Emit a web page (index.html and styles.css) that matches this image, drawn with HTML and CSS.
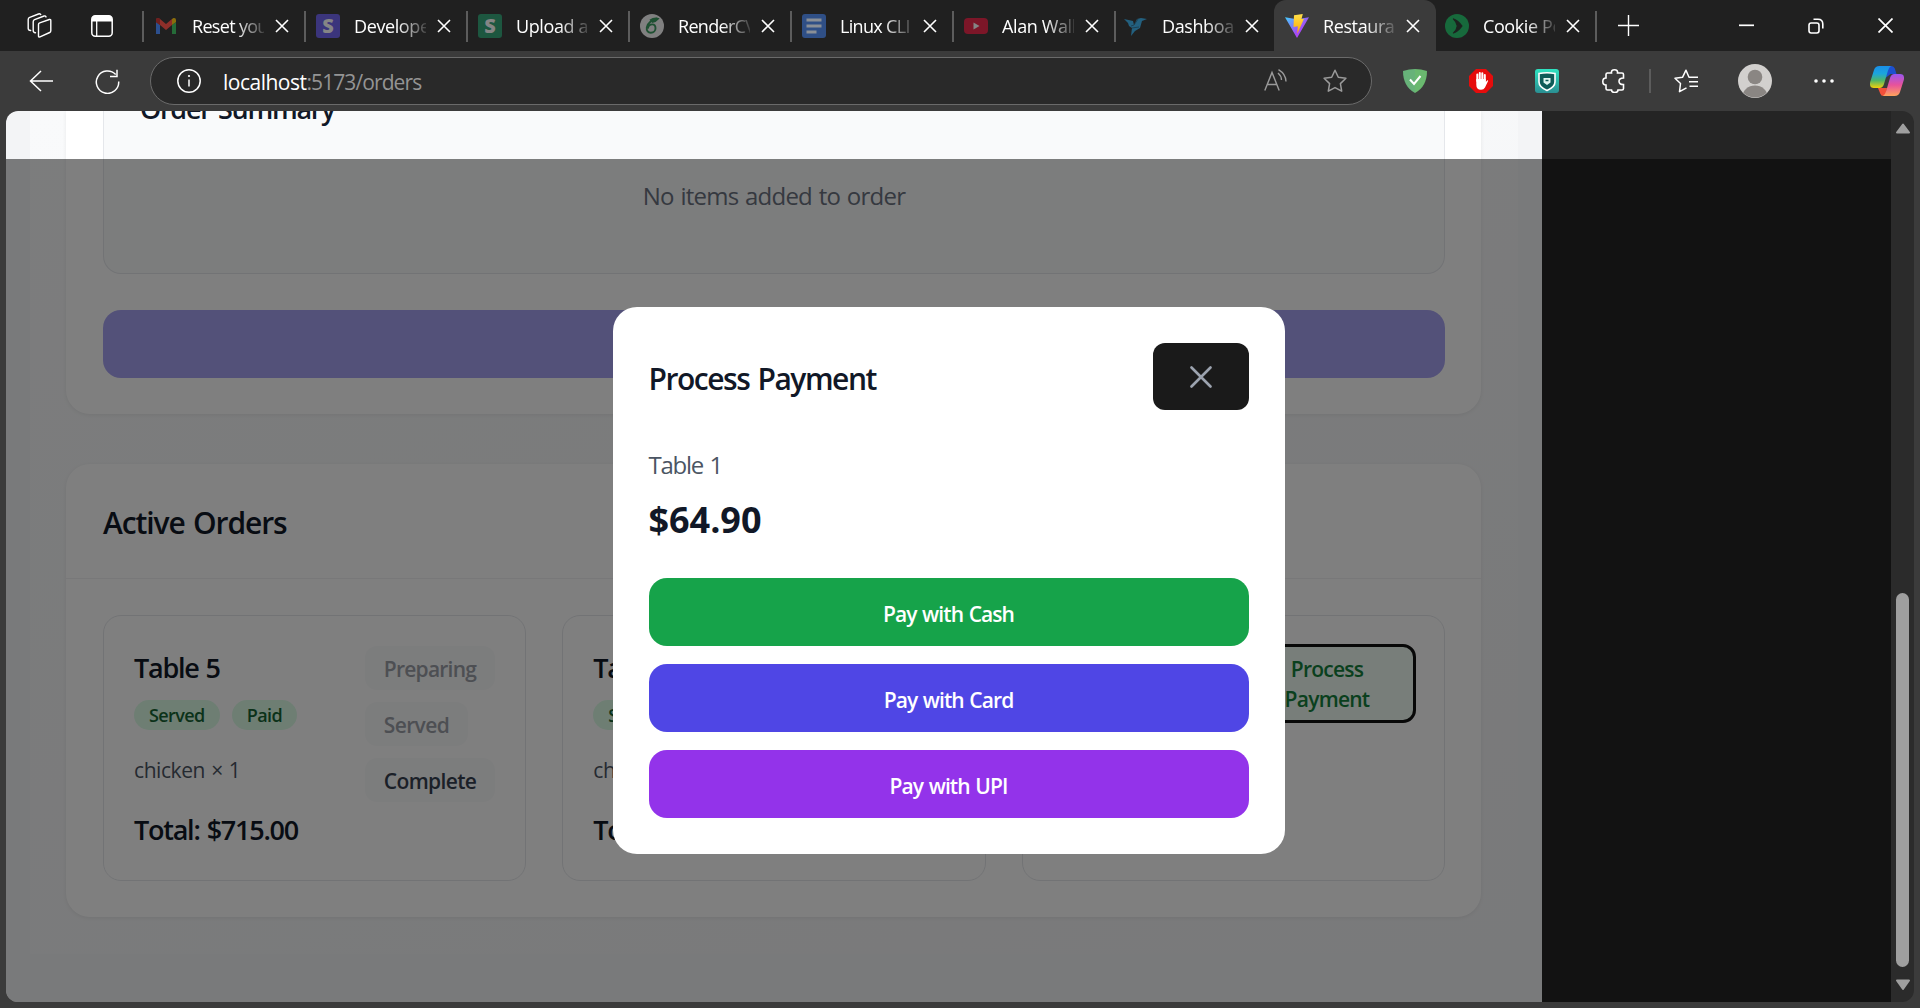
FILE: index.html
```html
<!DOCTYPE html>
<html lang="en">
<head>
<meta charset="utf-8">
<title>Restaurant Orders</title>
<link rel="stylesheet" href="styles.css">
</head>
<body>
<svg class="defs" width="0" height="0" aria-hidden="true">
  <symbol id="x" viewBox="0 0 14 14"><path d="M1 1l12 12M13 1L1 13" fill="none" stroke="#fff" stroke-width="1.6"/></symbol>
  <linearGradient id="vb" x1="0" y1="0" x2="1" y2="1"><stop offset="0" stop-color="#41d1ff"/><stop offset=".6" stop-color="#a34df5"/><stop offset="1" stop-color="#bd34fe"/></linearGradient>
  <linearGradient id="vy" x1="0" y1="0" x2="0" y2="1"><stop offset="0" stop-color="#ffe04a"/><stop offset="1" stop-color="#ffa800"/></linearGradient>
  <linearGradient id="c1" x1="0" y1="0" x2="0" y2="1"><stop offset="0" stop-color="#1a8fe8"/><stop offset=".35" stop-color="#1ba5dd"/><stop offset=".65" stop-color="#4db56a"/><stop offset="1" stop-color="#f3d009"/></linearGradient>
  <linearGradient id="c2" x1="0" y1="0" x2="0" y2="1"><stop offset="0" stop-color="#9a56f0"/><stop offset=".5" stop-color="#e8529b"/><stop offset="1" stop-color="#ffa45c"/></linearGradient>
  <linearGradient id="tl" x1="0" y1="0" x2="0" y2="1"><stop offset="0" stop-color="#2fe3c1"/><stop offset="1" stop-color="#2a8f92"/></linearGradient>
</svg>
<div class="browser">
  <header class="tabstrip">
    <div class="strip-tools">
      <svg width="25" height="25" viewBox="0 0 25 25" fill="none" stroke="#fff" stroke-width="1.4" stroke-linejoin="round" stroke-linecap="round"><path d="M11.500 11.500q0-1.300 1.200-1.700L22.400 6.500q1.400-.4 1.400 1v10.300q0 1.200-1.100 1.700l-9.700 4.400q-1.500.5-1.500-1zM8.500 19.800q-2.300-.2-2.300-2.300V8.700q0-1.500 1.400-2.100l9.500-3.600q1.300-.4 1.900.9M3.700 17.500q-2.500-.2-2.500-2V6.500q0-1.500 1.500-2.100L11.500 1q1.300-.5 2.200.4"/></svg>
      <svg width="22" height="22" viewBox="0 0 22 22"><rect x=".8" y=".8" width="20.400" height="20.400" rx="3.500" fill="none" stroke="#fff" stroke-width="1.500"/><path d="M1 6.500V4q0-3.500 3.500-3.500h13Q21 .5 21 4v2.500z" fill="#fff"/><path d="M5.700 6v15" stroke="#fff" stroke-width="1.300"/></svg>
    </div>
    <div class="tab"><svg class="fav" viewBox="0 0 24 24"><path d="M2 20V8l4 3v9z" fill="#2c4f8e"/><path d="M18 20v-9l4-3v12z" fill="#256b38"/><path d="M18 11V5l1.500-1Q22 3.500 22 6v2z" fill="#8a6d0c"/><path d="M2 8V6q0-2.500 2.500-2L6 5l6 5 6-5v6l-6 5-6-5z" fill="#8e2f2a"/><path d="M2 8V6q0-2.500 2.500-2L6 5v6z" fill="#6e1f1e"/></svg><span class="label snug">Reset your</span><svg class="close"><use href="#x"/></svg></div>
    <div class="tab"><span class="fav letter indigo">S</span><span class="label">Developers</span><svg class="close"><use href="#x"/></svg></div>
    <div class="tab"><span class="fav letter green">S</span><span class="label">Upload an</span><svg class="close"><use href="#x"/></svg></div>
    <div class="tab"><svg class="fav" viewBox="0 0 24 24"><circle cx="12" cy="12" r="12" fill="#808080"/><path d="M17.500 4.500Q8 7 6.800 13.500c-.6 3.500 1.500 5.300 4 5.300 3 0 4.700-2.200 4.700-4.500 0-2.400-1.300-3.900-3.200-3.900-2.500 0-4 2-4.500 4M10 6.500Q14 3.800 18 4.800 16 7.500 12 8" fill="none" stroke="#1f5032" stroke-width="1.900"/></svg><span class="label snug">RenderCV</span><svg class="close"><use href="#x"/></svg></div>
    <div class="tab"><svg class="fav" viewBox="0 0 24 24"><rect width="24" height="24" rx="3" fill="#2f4f86"/><path d="M4.500 6h15M4.500 12h15M4.500 18h10" stroke="#8a8f96" stroke-width="3"/></svg><span class="label snug">Linux CLI</span><svg class="close"><use href="#x"/></svg></div>
    <div class="tab"><svg class="fav" viewBox="0 0 24 24"><rect y="4" width="24" height="16" rx="4" fill="#7c1628"/><path d="M9.500 8.500v7l6-3.500z" fill="#858585"/></svg><span class="label">Alan Walk</span><svg class="close"><use href="#x"/></svg></div>
    <div class="tab slim"><svg class="fav" viewBox="0 0 24 24"><path d="M0 5l9 2 1 4 3-6 4-1 6 1-5 2-2 7-5 3-4 5 1-8-3-2-1-3z" fill="#23607f"/><path d="M7 12l3-1 4-6M8 14l7-1" stroke="#1b3a4a" stroke-width=".8" fill="none"/></svg><span class="label">Dashboard</span><svg class="close"><use href="#x"/></svg></div>
    <div class="tab slim active"><svg class="fav" viewBox="0 0 24 24"><path d="M0 3.200l12 2 12-2L12 24z" fill="url(#vb)"/><path d="M9 1.200L17.800 0l-1.300 5 2.500-.3-6.700 15 .5-7.500-4.300.8z" fill="url(#vy)"/></svg><span class="label">Restaurant</span><svg class="close"><use href="#x"/></svg></div>
    <div class="tab slim last"><svg class="fav" viewBox="0 0 24 24"><circle cx="12" cy="12" r="12" fill="#176a3c"/><path d="M8.500 5q4.500 1.500 8.500 7-4 5.500-8.500 7 3-2.500 3.800-7-.8-4.500-3.800-7z" fill="#1d2320" stroke="#1d2320" stroke-width="1.200" stroke-linejoin="round"/><path d="M7.500 9.500L10.800 12l-3.300 2.500z" fill="#176a3c"/></svg><span class="label">Cookie Po</span><svg class="close"><use href="#x"/></svg></div>
    <svg class="plus" width="21" height="21" viewBox="0 0 21 21"><path d="M10.500 0v21M0 10.500h21" stroke="#fff" stroke-width="1.400"/></svg>
    <div class="window-controls">
      <svg width="15" height="15" viewBox="0 0 15 15"><path d="M0 7.300h15" stroke="#fff" stroke-width="1.700"/></svg>
      <svg width="16" height="16" viewBox="0 0 16 16" fill="none" stroke="#fff" stroke-width="1.600"><rect x="1" y="5" width="10" height="10" rx="2.200"/><path d="M5.500 1.200h4.500q4.800 0 4.800 4.800v4.500"/></svg>
      <svg width="15" height="15" viewBox="0 0 15 15"><path d="M.5.500l14 14M14.500.500l-14 14" stroke="#fff" stroke-width="1.700"/></svg>
    </div>
  </header>

  <div class="toolbar">
    <svg class="back" width="24" height="22" viewBox="0 0 24 22"><path d="M12 1L1.500 11 12 21M1.500 11H24" fill="none" stroke="#fff" stroke-width="1.500"/></svg>
    <svg class="reload" width="25" height="25" viewBox="0 0 25 25"><path d="M20.700 5.500A11.200 11.200 0 1 0 23.700 12.500M22 .8v6.700h-7" fill="none" stroke="#fff" stroke-width="1.500"/></svg>
    <div class="address">
      <svg width="24" height="24" viewBox="0 0 24 24"><circle cx="12" cy="12" r="11.200" fill="none" stroke="#fff" stroke-width="1.500"/><path d="M12 10.500v7" stroke="#fff" stroke-width="1.500"/><circle cx="12" cy="7" r="1.100" fill="#fff"/></svg>
      <div class="url"><span class="host">localhost</span><span>:5173/orders</span></div>
      <svg class="read" width="24" height="22" viewBox="0 0 24 22" fill="none" stroke="#9a9a9a" stroke-width="1.400"><path d="M.8 21.500L8 3.500l7.200 18M3.300 15.500h9.500M14 4q3.500 3 3.500 7M14.500.600Q21.800 5 22 12.500"/></svg>
      <svg width="24" height="24" viewBox="0 0 24 24"><path d="M12 1.300l3.300 6.900 7.600 1.100-5.500 5.300 1.300 7.600L12 18.600l-6.700 3.600 1.300-7.600L1.100 9.300l7.600-1.100z" fill="none" stroke="#9a9a9a" stroke-width="1.500" stroke-linejoin="round"/></svg>
    </div>
    <div class="extensions">
      <svg width="24" height="24" viewBox="0 0 24 24"><path d="M0 2Q6 0 12 0v24Q0 17.500 0 2z" fill="#67b279"/><path d="M24 2Q18 0 12 0v24Q24 17.500 24 2z" fill="#6ab96f"/><path d="M7 10.500l4 4.500 6.500-8" fill="none" stroke="#fff" stroke-width="2"/></svg>
      <svg width="24" height="24" viewBox="0 0 24 24"><path d="M7 0h10l7 7v10l-7 7H7l-7-7V7z" fill="#e60c0c"/><path d="M8.300 12V5.500M10.800 11V4M13.300 11V4.200M15.800 12V6" stroke="#fff" stroke-width="2" stroke-linecap="round"/><path d="M7.300 10h9.500v3l1.300-1.600q1.200-.6 1 .7L16 18.500q-1.200 2.200-4 2.200-4.700 0-4.700-5z" fill="#fff"/></svg>
      <svg width="24" height="24" viewBox="0 0 24 24"><rect width="24" height="24" rx="3" fill="url(#tl)"/><path d="M4 4.500Q12 3 20 4.500V13q0 5-8 8.500Q4 18 4 13z" fill="#0e5b58" stroke="#fff" stroke-width="1.600"/><path d="M8.500 9h7v4.500L12 16l-3.500-2.500z" fill="#dff5f0"/><path d="M10.500 11.500h3" stroke="#0e5b58" stroke-width="1.500"/></svg>
      <svg class="puzzle" width="24" height="24" viewBox="0 0 24 24"><path d="M5 4h4.500Q9 .8 12.500.800T15.500 4H20q1.500 0 1.500 1.500V9q-4.500 0-4.500 3.300T21.500 15.500v4q0 1.500-1.500 1.500h-4q0 2.500-3.200 2.500T9.500 21H5.500Q4 21 4 19.500V16Q.8 16 .8 12.500T4 9V5.500Q4 4 5.500 4z" fill="none" stroke="#fff" stroke-width="1.600"/></svg>
    </div>
    <span class="divider"></span>
    <svg class="favorites" width="24" height="24" viewBox="0 0 24 24" fill="none" stroke="#fff" stroke-width="1.500" stroke-linejoin="round"><path d="M12.500 18.800L5.500 22.700l1-8.200L1 9.300l7.500-1L12 1.200l3 7.100H24M15 12.800h9M15.500 17.300H24"/></svg>
    <svg class="avatar" width="34" height="34" viewBox="0 0 34 34"><clipPath id="ac"><circle cx="17" cy="17" r="16.500"/></clipPath><circle cx="17" cy="17" r="17" fill="#d2d0ce"/><g clip-path="url(#ac)" fill="#8a8683"><circle cx="17" cy="13" r="7.300"/><ellipse cx="17" cy="32.500" rx="12.500" ry="11"/></g></svg>
    <svg class="more" width="20" height="6" viewBox="0 0 20 6" fill="#fff"><circle cx="2" cy="3" r="1.800"/><circle cx="10" cy="3" r="1.800"/><circle cx="18" cy="3" r="1.800"/></svg>
    <svg class="copilot" width="34" height="30" viewBox="0 0 34 30"><path d="M17 0h4.500q2.500 0 3.300 2.500L26.500 8h-6l-5 4z" fill="#1d50d0"/><path d="M8 22h9l-1 8h-2.500q-2.500 0-3.300-2.500z" fill="#f2503a"/><path d="M9.500 0H21q-2 1-3 4.500l-4 13.500q-1.200 4-4.500 4H4q-5 0-3.800-6L4 4Q5.200 0 9.500 0z" fill="url(#c1)"/><path d="M24.500 30H13q2-1 3-4.500L20 12q1.200-4 4.500-4H30q5 0 3.800 6L30 26q-1.200 4-5.500 4z" fill="url(#c2)"/></svg>
  </div>

  <div class="viewport">
    <div class="page">
      <div class="shell">
        <main class="content">
          <section class="card order-form">
            <div class="summary">
              <h3>Order Summary</h3>
              <p>No items added to order</p>
            </div>
            <div class="place-order"></div>
          </section>

          <section class="card active-orders">
            <div class="card-head"><h2>Active Orders</h2></div>
            <div class="orders">
              <article class="order">
                <div class="info">
                  <h3 class="table-name">Table 5</h3>
                  <div class="pills"><span class="pill">Served</span><span class="pill">Paid</span></div>
                  <p class="item">chicken × 1</p>
                  <p class="total">Total: $715.00</p>
                </div>
                <div class="actions">
                  <button class="act off tight">Preparing</button>
                  <button class="act off">Served</button>
                  <button class="act">Complete</button>
                </div>
              </article>
              <article class="order">
                <div class="info">
                  <h3 class="table-name">Table 3</h3>
                  <div class="pills"><span class="pill">Served</span></div>
                  <p class="item">chicken × 1</p>
                  <p class="total">Total: $64.90</p>
                </div>
              </article>
              <article class="order">
                <div class="info"></div>
                <div class="actions"><button class="process">Process Payment</button></div>
              </article>
            </div>
          </section>
        </main>
      </div>

      <div class="overlay">
        <div class="modal">
          <div class="modal-head">
            <h2>Process Payment</h2>
            <button class="dismiss"><svg width="22" height="22" viewBox="0 0 22 22"><path d="M1.500 1.500l19 19M20.500 1.500l-19 19" stroke="#9ca3af" stroke-width="2.600" stroke-linecap="round"/></svg></button>
          </div>
          <p class="modal-table">Table 1</p>
          <p class="amount">$64.90</p>
          <div class="methods">
            <button class="pay cash">Pay with Cash</button>
            <button class="pay bank">Pay with Card</button>
            <button class="pay upi">Pay with UPI</button>
          </div>
        </div>
      </div>
    </div>
    <div class="scrollbar">
      <svg width="16" height="11" viewBox="0 0 16 11"><path d="M8 1.500L14 9.500H2z" fill="#9f9f9f" stroke="#9f9f9f" stroke-width="2" stroke-linejoin="round"/></svg>
      <span class="thumb"></span>
      <svg width="16" height="12" viewBox="0 0 16 12"><path d="M8 10L14 1.500H2z" fill="#9f9f9f" stroke="#9f9f9f" stroke-width="2" stroke-linejoin="round"/></svg>
    </div>
  </div>
</div>
</body>
</html>
```
FILE: styles.css
```css
* { box-sizing: border-box; }
html, body { margin: 0; height: 100%; }
body { background: #3b3b3b; font-family: "Open Sans", "Noto Sans", sans-serif; overflow: hidden; }
h2, h3, p { margin: 0; }
h2, h3 { font-weight: 600; color: #111827; }
button { font-family: inherit; border: 0; padding: 0; margin: 0; }
svg { display: block; flex: none; }
.defs { position: absolute; }

.browser { width: 1920px; height: 1008px; display: flex; flex-direction: column; }

/* Tab strip */
.tabstrip { height: 51px; flex: none; background: #202020; display: flex; align-items: center; }
.strip-tools { width: 142px; flex: none; display: flex; align-items: center; gap: 39px; padding-left: 27px; }
.tab { position: relative; width: 162px; height: 51px; flex: none; display: flex; align-items: center; padding-left: 12px; }
.tab.slim { width: 160px; padding-left: 10px; }
.tab::before { content: ""; position: absolute; left: 0; top: 11px; width: 2px; height: 31px; background: #5c5c5c; }
.tab.active::before, .tab.last::before { display: none; }
.tab.last::after { content: ""; position: absolute; right: -2px; top: 11px; width: 2px; height: 31px; background: #5c5c5c; }
.tab.active { background: #3b3b3b; border-radius: 12px 12px 0 0; margin: 0 -1px 0 0; width: 162px; padding-left: 11px; }
.fav { width: 24px; height: 24px; flex: none; }
.letter { border-radius: 3px; color: #858585; font-size: 20px; line-height: 23px; font-weight: 800; text-align: center; }
.indigo { background: #3b357c; }
.green { background: #1d5740; }
.label { width: 72px; margin-left: 14px; font-size: 18px; line-height: 24px; letter-spacing: -0.022em; color: #fff; overflow: hidden; white-space: nowrap; flex: none; -webkit-mask-image: linear-gradient(90deg, #000 60%, rgba(0, 0, 0, 0.15) 100%); mask-image: linear-gradient(90deg, #000 60%, rgba(0, 0, 0, 0.15) 100%); }
.label.snug { letter-spacing: -0.038em; }
.close { width: 14px; height: 14px; margin-left: 11px; }
.plus { margin-left: 23px; }
.window-controls { margin-left: auto; padding-right: 27px; display: flex; align-items: center; gap: 54px; }

/* Toolbar */
.toolbar { height: 60px; flex: none; display: flex; align-items: center; background: #3b3b3b; padding-left: 29px; }
.reload { margin-left: 42px; }
.address { width: 1222px; height: 48px; margin-left: 30px; border: 1px solid #6a6a6a; border-radius: 24px; background: #292929; display: flex; align-items: center; padding: 0 24px 0 26px; flex: none; }
.url { display: flex; flex: 1; margin-left: 22px; padding-top: 1px; font-size: 21px; line-height: 30px; letter-spacing: -0.043em; color: #949494; }
.host { color: #fff; letter-spacing: -0.024em; }
.read { margin-right: 35px; margin-bottom: 2px; }
.extensions { display: flex; gap: 42px; margin-left: 31px; }
.puzzle { margin-left: 1px; }
.divider { width: 2px; height: 24px; background: #5c5c5c; margin-left: 23px; }
.favorites { margin-left: 23px; }
.avatar { margin-left: 40px; }
.more { margin-left: 42px; }
.copilot { margin-left: 36px; }

/* Viewport */
.viewport { height: 891px; margin: 0 6px; border-radius: 12px; overflow: hidden; display: flex; flex: none; }
.page { position: relative; flex: 1; background: #242424; overflow: hidden; }
.scrollbar { width: 23px; background: #2b2b2b; display: flex; flex-direction: column; align-items: center; padding: 12px 0 11px; }
.thumb { width: 13px; height: 374px; border-radius: 7px; background: #9f9f9f; margin-top: auto; margin-bottom: 12px; }

.shell { width: 1536px; height: 891px; background: #f3f4f6; padding: 0 24px; }
.content { height: 843px; padding: 0 37px 0 36px; background: linear-gradient(160deg, #f9fafb, #f3f4f6); }
.card { background: #fff; border-radius: 24px; box-shadow: 0 1px 4px rgba(0, 0, 0, 0.07); }
.order-form { height: 303px; border-radius: 0 0 24px 24px; padding: 0 36px 36px 37px; overflow: hidden; }
.summary { height: 163px; padding: 0 36px; background: #f9fafb; border: 1px solid #e5e7eb; border-top: 0; border-radius: 0 0 18px 18px; overflow: hidden; }
.summary h3 { margin-top: -23px; font-size: 27px; line-height: 42px; letter-spacing: -0.047em; word-spacing: 0.06em; }
.summary p { margin-top: 48px; text-align: center; font-size: 24px; line-height: 36px; letter-spacing: -0.032em; word-spacing: 0.05em; color: #6b7280; }
.place-order { height: 68px; margin-top: 36px; border-radius: 18px; background: #a7a2f2; }

.active-orders { height: 453px; margin-top: 50px; }
.card-head { height: 115px; padding: 36px 37px 0; border-bottom: 1px solid #f0f1f3; }
.card-head h2 { font-size: 30px; line-height: 45px; letter-spacing: -0.037em; word-spacing: 0.06em; }
.orders { display: grid; grid-template-columns: repeat(3, 1fr); gap: 36px; padding: 36px 36px 0 37px; }
.order { height: 266px; border: 1px solid #e5e7eb; border-radius: 18px; padding: 31px 30px 0; display: flex; justify-content: space-between; }
.table-name { font-size: 27px; line-height: 42px; letter-spacing: -0.046em; word-spacing: 0.04em; }
.pills { display: flex; gap: 12px; margin-top: 11px; }
.pill { height: 30px; padding: 0 15px; border-radius: 15px; background: #dcfce7; color: #166534; font-size: 18px; line-height: 31px; font-weight: 600; letter-spacing: -0.033em; }
.item { margin-top: 25px; font-size: 21px; line-height: 30px; letter-spacing: -0.02em; word-spacing: 0.05em; color: #4b5563; white-space: nowrap; }
.total { margin-top: 24px; font-size: 27px; line-height: 42px; font-weight: 600; letter-spacing: -0.046em; word-spacing: 0.05em; color: #111827; white-space: nowrap; }
.actions { display: flex; flex-direction: column; align-items: flex-start; gap: 12px; margin-top: -1px; }
.act { height: 44px; padding: 2px 19px 0 19px; border-radius: 12px; background: #f9fafb; color: #374151; font-size: 21px; line-height: 42px; font-weight: 600; letter-spacing: -0.03em; }
.act.off { color: #9b9fa7; }
.act.tight { letter-spacing: -0.036em; }
.process { width: 178px; height: 79px; margin: -2px -2px 0 0; padding: 1px 30px 0; border: 3px solid #101010; border-radius: 13px; background: #f0fdf4; color: #15803d; font-size: 21px; line-height: 30px; font-weight: 600; letter-spacing: -0.036em; }

/* Payment dialog */
.overlay { position: absolute; inset: 48px 0 0 0; background: rgba(0, 0, 0, 0.5); display: flex; align-items: center; justify-content: center; }
.modal { width: 672px; height: 547px; padding: 36px; border-radius: 24px; background: #fff; }
.modal-head { height: 67px; display: flex; justify-content: space-between; align-items: center; }
.modal-head h2 { padding-top: 4px; font-size: 30px; line-height: 45px; letter-spacing: -0.049em; word-spacing: 0.06em; }
.dismiss { width: 96px; height: 67px; border-radius: 12px; background: #1a1a1a; display: flex; align-items: center; justify-content: center; }
.modal-table { margin-top: 37px; font-size: 24px; line-height: 36px; letter-spacing: -0.052em; word-spacing: 0.06em; color: #4b5563; }
.amount { margin-top: 10px; font-size: 36px; line-height: 54px; font-weight: 700; letter-spacing: -0.001em; color: #111827; }
.methods { display: flex; flex-direction: column; gap: 18px; margin-top: 31px; }
.pay { height: 68px; padding-top: 3px; border-radius: 18px; color: #fff; font-size: 21px; font-weight: 600; letter-spacing: -0.044em; word-spacing: 0.05em; }
.cash { background: #16a34a; }
.bank { background: #4f46e5; }
.upi { background: #9333ea; }
```
